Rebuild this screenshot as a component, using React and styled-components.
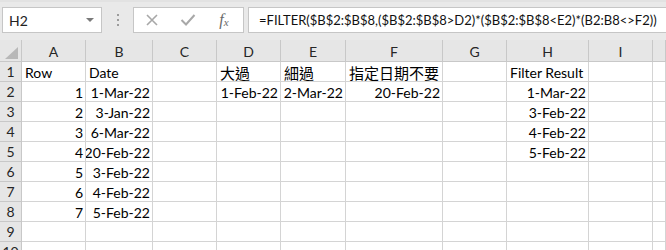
import React from 'react';
import styled, { createGlobalStyle } from 'styled-components';

const GlobalStyle = createGlobalStyle`
    body{
        margin: 0;
        background: #ffffff;
        font-family: Lato, "Noto Sans CJK TC", sans-serif;
    }
`;

const columns = [
    { key: 'A', width: '64px' },
    { key: 'B', width: '67px' },
    { key: 'C', width: '64px' },
    { key: 'D', width: '64px' },
    { key: 'E', width: '65px' },
    { key: 'F', width: '97px' },
    { key: 'G', width: '64px' },
    { key: 'H', width: '82px' },
    { key: 'I', width: '64px' },
    { key: '', width: '1fr' },
];

// [text, right aligned, chinese]
const rows = [
    { A: ['Row'], B: ['Date'], D: ['大過', 0, 1], E: ['細過', 0, 1], F: ['指定日期不要', 0, 1], H: ['Filter Result'] },
    { A: ['1', 1], B: ['1-Mar-22', 1], D: ['1-Feb-22', 1], E: ['2-Mar-22', 1], F: ['20-Feb-22', 1], H: ['1-Mar-22', 1] },
    { A: ['2', 1], B: ['3-Jan-22', 1], H: ['3-Feb-22', 1] },
    { A: ['3', 1], B: ['6-Mar-22', 1], H: ['4-Feb-22', 1] },
    { A: ['4', 1], B: ['20-Feb-22', 1], H: ['5-Feb-22', 1] },
    { A: ['5', 1], B: ['3-Feb-22', 1] },
    { A: ['6', 1], B: ['4-Feb-22', 1] },
    { A: ['7', 1], B: ['5-Feb-22', 1] },
    {},
    {},
];

const App = () => {
    return (
        <>
            <GlobalStyle />
            <Toolbar>
                <NameBox>
                    <span>H2</span>
                    <DropArrow />
                </NameBox>
                <Dots>
                    <i /><i /><i />
                </Dots>
                <ButtonBox>
                    <IconSlot>
                        <svg width="14" height="14" viewBox="0 0 14 14">
                            <path d="M2 2 L12 12 M12 2 L2 12" stroke="#a8a8a8" strokeWidth="1.6" fill="none" />
                        </svg>
                    </IconSlot>
                    <IconSlot>
                        <svg width="16" height="14" viewBox="0 0 16 14">
                            <path d="M1.5 7 L6 11.5 L14.5 2" stroke="#a8a8a8" strokeWidth="2" fill="none" />
                        </svg>
                    </IconSlot>
                    <Fx>f<sub>x</sub></Fx>
                </ButtonBox>
                <FormulaBox>=FILTER($B$2:$B$8,($B$2:$B$8&gt;D2)*($B$2:$B$8&lt;E2)*(B2:B8&lt;&gt;F2))</FormulaBox>
            </Toolbar>
            <Sheet>
                <Corner>
                    <svg width="13" height="12" viewBox="0 0 13 12">
                        <path d="M13 0 L13 12 L0 12 Z" fill="#b8b8b8" />
                    </svg>
                </Corner>
                {columns.map((c, i) => <ColHead key={i}>{c.key}</ColHead>)}
                {rows.map((r, i) => (
                    <React.Fragment key={i}>
                        <RowHead>{i + 1}</RowHead>
                        {columns.map((c, j) => {
                            const v = r[c.key];
                            return (
                                <Cell key={j} $right={v && v[1]} $cjk={v && v[2]}>
                                    {v ? v[0] : ''}
                                </Cell>
                            );
                        })}
                    </React.Fragment>
                ))}
            </Sheet>
        </>
    );
};

const Toolbar = styled.div`
    height: 40px;
    box-sizing: border-box;
    background: #e9e9e9;
    border-top: 2px solid #e2e2e2;
    padding: 5px 0 7px 2px;
    display: flex;
    align-items: stretch;
    overflow: hidden;
`;
const NameBox = styled.div`
    flex: 0 0 100px;
    box-sizing: border-box;
    background: #ffffff;
    border: 1px solid #c6c6c6;
    display: flex;
    align-items: center;
    justify-content: space-between;
    padding: 0 7px 0 6px;
    font-size: 14px;
    color: #222;
`;
const DropArrow = styled.span`
    width: 0;
    height: 0;
    border-left: 4px solid transparent;
    border-right: 4px solid transparent;
    border-top: 4px solid #7a7a7a;
`;
const Dots = styled.div`
    flex: 0 0 31px;
    display: flex;
    flex-direction: column;
    align-items: center;
    justify-content: center;
    gap: 3px;
    i{
        width: 2px;
        height: 2px;
        background: #9c9c9c;
    }
`;
const ButtonBox = styled.div`
    flex: 0 0 111px;
    box-sizing: border-box;
    background: #ffffff;
    border: 1px solid #c6c6c6;
    display: flex;
    align-items: center;
    padding: 0 1px 0 0;
`;
const IconSlot = styled.div`
    width: 36px;
    display: flex;
    justify-content: center;
    align-items: center;
`;
const Fx = styled.div`
    width: 36px;
    text-align: center;
    font-family: "Liberation Serif", serif;
    font-style: italic;
    font-size: 16px;
    color: #6a6a6a;
    sub{
        font-size: 11px;
        vertical-align: -1px;
    }
`;
const FormulaBox = styled.div`
    flex: 1;
    min-width: 0;
    margin-left: 4px;
    background: #ffffff;
    border: 1px solid #c6c6c6;
    border-right: none;
    display: flex;
    align-items: center;
    padding-left: 10px;
    font-size: 13px;
    color: #111;
    white-space: nowrap;
    overflow: hidden;
`;
const Sheet = styled.div`
    display: grid;
    grid-template-columns: 22px ${columns.map(c => c.width).join(' ')};
    grid-template-rows: 22px;
    grid-auto-rows: 20px;
    font-size: 14px;
    background: #ffffff;
`;
const Corner = styled.div`
    background: #e6e6e6;
    border-right: 1px solid #c8c8c8;
    border-bottom: 1px solid #c8c8c8;
    display: flex;
    align-items: flex-end;
    justify-content: flex-end;
    padding: 0 3px 2px 0;
`;
const ColHead = styled.div`
    background: #e6e6e6;
    border-right: 1px solid #c8c8c8;
    border-bottom: 1px solid #c8c8c8;
    box-sizing: border-box;
    display: flex;
    align-items: center;
    justify-content: center;
    padding-top: 1px;
    color: #262626;
`;
const RowHead = styled.div`
    background: #e6e6e6;
    border-right: 1px solid #c8c8c8;
    border-bottom: 1px solid #c8c8c8;
    box-sizing: border-box;
    display: flex;
    align-items: center;
    justify-content: center;
    color: #262626;
`;
const Cell = styled.div`
    border-right: 1px solid #d4d4d4;
    border-bottom: 1px solid #d4d4d4;
    box-sizing: border-box;
    display: flex;
    align-items: center;
    justify-content: ${p => p.$right ? 'flex-end' : 'flex-start'};
    padding: 1px 2px 0 3px;
    font-size: ${p => p.$cjk ? '15px' : '14px'};
    color: #000;
    white-space: nowrap;
    overflow: hidden;
    min-width: 0;
`;

export default App;
